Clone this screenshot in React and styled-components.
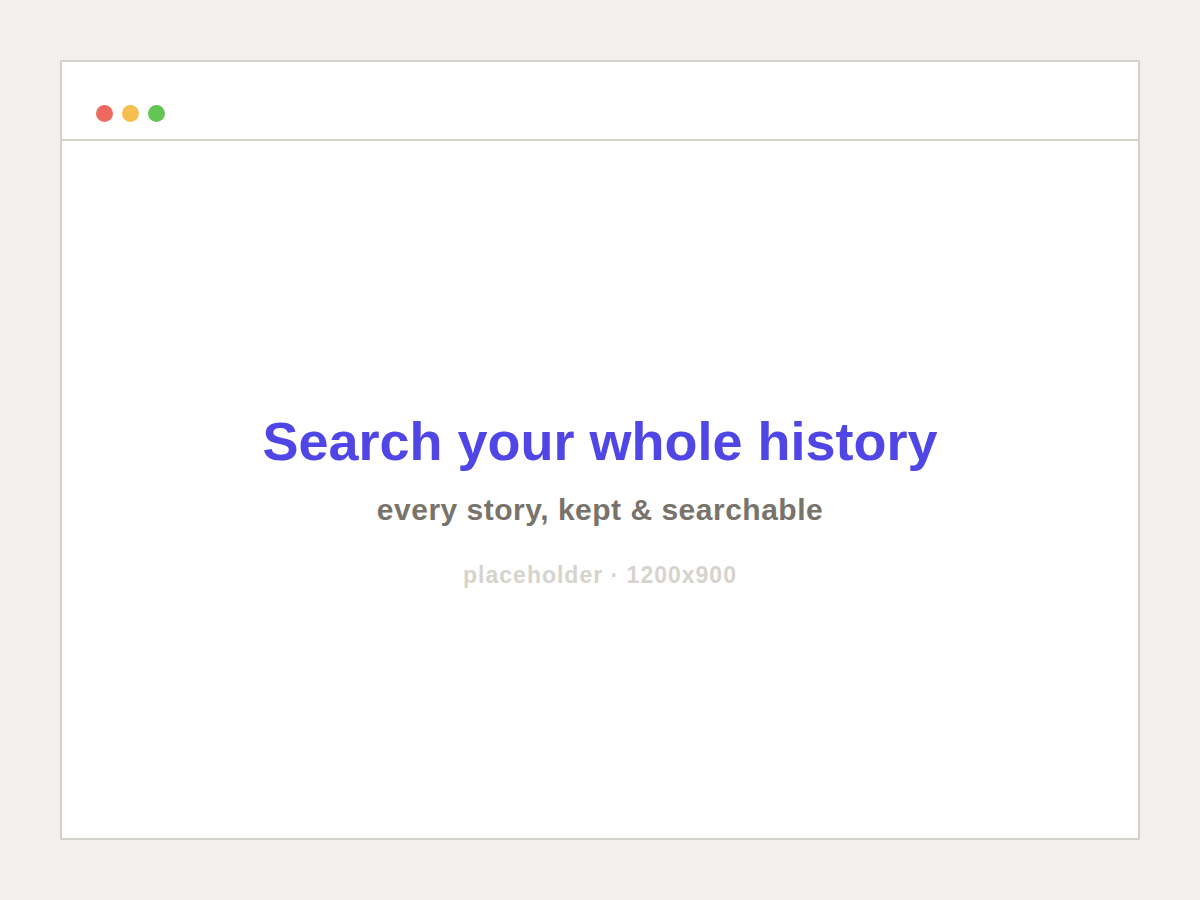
import React from 'react';
import styled, { createGlobalStyle } from 'styled-components';

const GlobalStyle = createGlobalStyle`
    html, body {
        margin: 0;
        padding: 0;
        background: #f1f0ee;
        font-family: "Liberation Sans", Arial, sans-serif;
    }
`;

const Page = styled.div`
    width: 1200px;
    height: 900px;
    padding: 60px;
    box-sizing: border-box;
    display: flex;
`;

const Window = styled.div`
    flex: 1;
    display: flex;
    flex-direction: column;
    background: #ffffff;
    border: 2px solid #d6d3cd;
`;

const TitleBar = styled.div`
    display: flex;
    align-items: center;
    gap: 9px;
    padding: 43px 34px 17px;
    border-bottom: 2px solid #d6d3cd;
`;

const Dot = styled.span`
    width: 17px;
    height: 17px;
    border-radius: 50%;
    background: ${(p) => p.color};
`;

const Content = styled.div`
    flex: 1;
    display: flex;
    flex-direction: column;
    align-items: center;
    justify-content: center;
    padding-top: 19px;
`;

const Title = styled.h1`
    margin: 0;
    font-size: 54px;
    line-height: 64px;
    font-weight: 700;
    color: #4f46e5;
`;

const Subtitle = styled.p`
    margin: 19px 0 0;
    font-size: 30px;
    line-height: 36px;
    letter-spacing: 0.5px;
    font-weight: 700;
    color: #78736b;
`;

const Note = styled.p`
    margin: 33px 0 0;
    font-size: 23px;
    line-height: 28px;
    letter-spacing: 1px;
    font-weight: 700;
    color: #d6d3cd;
`;

const App = () => {
    return (
        <>
            <GlobalStyle />
            <Page>
                <Window>
                    <TitleBar>
                        <Dot color="#ee6a5f" />
                        <Dot color="#f6be50" />
                        <Dot color="#62c554" />
                    </TitleBar>
                    <Content>
                        <Title>Search your whole history</Title>
                        <Subtitle>every story, kept &amp; searchable</Subtitle>
                        <Note>placeholder · 1200x900</Note>
                    </Content>
                </Window>
            </Page>
        </>
    );
};

export default App;
